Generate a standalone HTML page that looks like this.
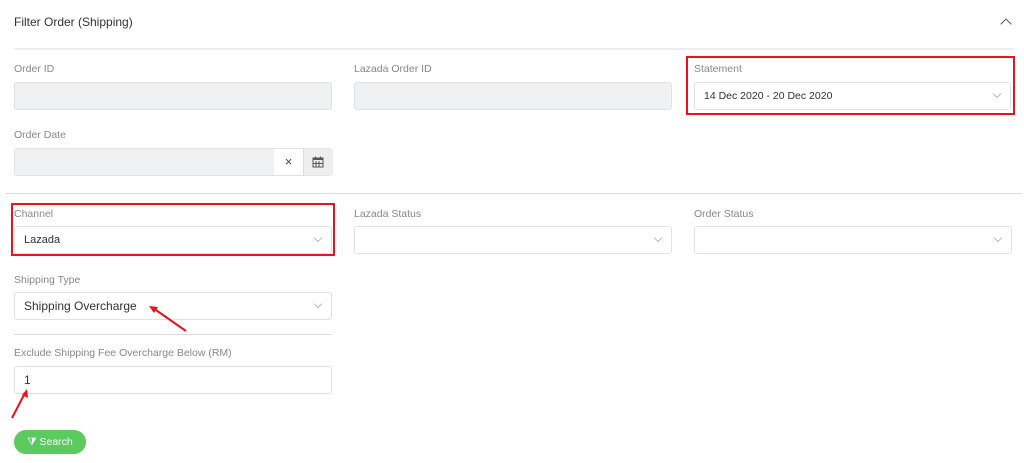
<!DOCTYPE html>
<html><head><style>
body{margin:0;width:1024px;height:463px;background:#fff;font-family:"Liberation Sans",sans-serif;position:relative;overflow:hidden}
.a{position:absolute}
.lbl{font-size:10.5px;color:#888}
.in{position:absolute;height:28px;border:1px solid #e2e2e2;border-radius:3px;box-sizing:border-box;background:#fff;font-size:11px;color:#333;line-height:26px;padding-left:9px}
.dis{background:#f0f1f3}
.chev{position:absolute;right:10px;top:8px;width:5px;height:5px;border-right:1px solid #bbb;border-bottom:1px solid #bbb;transform:rotate(45deg)}
.red{position:absolute;border:2px solid #e8141c;box-sizing:border-box}
</style></head><body>
<div class="a" style="left:14px;top:15px;font-size:12px;color:#333">Filter Order (Shipping)</div>
<div class="a" style="left:1002px;top:20px;width:7px;height:7px;border-left:1.3px solid #555;border-top:1.3px solid #555;transform:rotate(45deg)"></div>
<div class="a" style="left:14px;top:48px;width:1000px;height:2px;background:#eee"></div>

<div class="a lbl" style="left:14px;top:63px">Order ID</div>
<div class="in dis" style="left:14px;top:82px;width:318px"></div>
<div class="a lbl" style="left:354px;top:63px">Lazada Order ID</div>
<div class="in dis" style="left:354px;top:82px;width:318px"></div>
<div class="a lbl" style="left:694px;top:63px">Statement</div>
<div class="in" style="left:694px;top:82px;width:317px;font-size:10.5px">14 Dec 2020 - 20 Dec 2020<div class="chev"></div></div>
<div class="red" style="left:686px;top:56px;width:329px;height:59px"></div>

<div class="a lbl" style="left:14px;top:129px">Order Date</div>
<div class="in dis" style="left:14px;top:148px;width:318px;padding:0">
<div class="a" style="left:259px;top:0;width:29px;height:26px;background:#fff;text-align:center;font-size:13px;line-height:26px;color:#444">×</div>
<div class="a" style="left:288px;top:0;width:29px;height:26px;border-left:1px solid #ddd;background:#eee">
<svg width="12" height="12" style="position:absolute;left:8px;top:7px" viewBox="0 0 12 12"><rect x="1" y="2" width="10" height="9" fill="none" stroke="#555"/><rect x="1" y="2" width="10" height="2" fill="#555"/><path d="M4 5v6M7 5v6M1 7.5h10" stroke="#555"/><path d="M3.5 0.5v2M8.5 0.5v2" stroke="#555"/></svg></div>
</div>
<div class="a" style="left:5px;top:193px;width:1017px;height:1px;background:#ddd"></div>

<div class="a lbl" style="left:14px;top:208px">Channel</div>
<div class="in" style="left:14px;top:226px;width:318px">Lazada<div class="chev"></div></div>
<div class="red" style="left:11px;top:203px;width:324px;height:53px"></div>
<div class="a lbl" style="left:354px;top:208px">Lazada Status</div>
<div class="in" style="left:354px;top:226px;width:318px"><div class="chev"></div></div>
<div class="a lbl" style="left:694px;top:208px">Order Status</div>
<div class="in" style="left:694px;top:226px;width:318px"><div class="chev"></div></div>

<div class="a lbl" style="left:14px;top:274px">Shipping Type</div>
<div class="in" style="left:14px;top:292px;width:318px;font-size:12px">Shipping Overcharge<div class="chev"></div></div>
<div class="a" style="left:14px;top:334px;width:318px;height:1px;background:#ddd"></div>
<div class="a lbl" style="left:14px;top:347px">Exclude Shipping Fee Overcharge Below (RM)</div>
<div class="in" style="left:14px;top:366px;width:318px;font-size:12px">1</div>

<div class="a" style="left:14px;top:430px;width:72px;height:24px;border-radius:12px;background:#5ccb5f;color:#fff;font-size:10.5px;line-height:24px;text-align:center">&#x29E9; Search</div>

<svg class="a" style="left:0;top:0" width="1024" height="463">
<path d="M186 331L153 308" stroke="#e8141c" stroke-width="2"/><path d="M149 306l9 1-4 6z" fill="#e8141c"/>
<path d="M12 418L25 393" stroke="#e8141c" stroke-width="2"/><path d="M27 389l1 9-6-3z" fill="#e8141c"/>
</svg>
</body></html>
